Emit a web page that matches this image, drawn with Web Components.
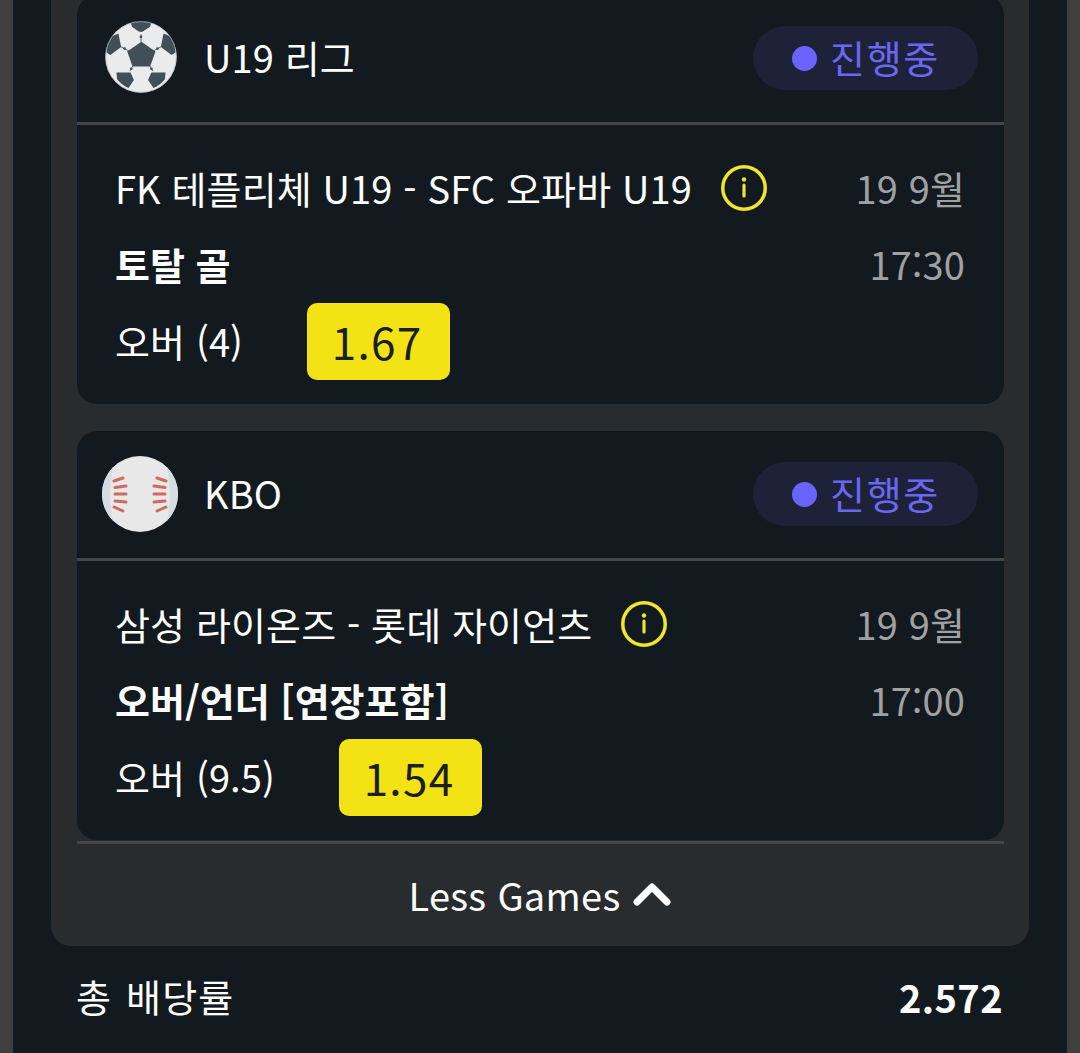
<!DOCTYPE html>
<html lang="ko">
<head>
<meta charset="utf-8">
<title>Bet slip</title>
<style>
  html, body { margin: 0; padding: 0; background: #131a1f; }
  body { height: 1053px; overflow: hidden; font-family: "Noto Sans CJK KR", "Noto Sans", sans-serif; color: #fff; }
</style>
</head>
<body>
<bet-slip total="2.572">
  <league-card league="U19 리그" ball="soccer" match="FK 테플리체 U19 - SFC 오파바 U19" market="토탈 골" pick="오버 (4)" odds="1.67" date="19 9월" time="17:30" class="first"></league-card>
  <league-card league="KBO" ball="baseball" match="삼성 라이온즈 - 롯데 자이언츠" market="오버/언더 [연장포함]" pick="오버 (9.5)" odds="1.54" date="19 9월" time="17:00"></league-card>
</bet-slip>

<script>
class BallIcon extends HTMLElement {
    connectedCallback() {
        this.attachShadow({ mode: 'open' });
        const soccer = `
            <svg viewBox="30 43 214 214" width="72" height="72">
                <circle cx="137" cy="150" r="106" fill="#e9ebec"/>
                <g stroke="#414f59" stroke-width="2.5" fill="none">
                    <path d="M137 82V105M78 120L101 132M196 120L173 132M113 176L104 192M163 176L172 192"/>
                </g>
                <g fill="#414f59">
                    <path d="M138 105L180 134L164 178L112 178L96 134Z"/>
                    <path d="M106 46Q137 38 168 46L164 60L140 76L130 74L110 60Z"/>
                    <path d="M70 80L78 120L46 144L34 136Q34 105 50 88Z"/>
                    <path d="M204 80L196 120L228 144L240 136Q240 105 224 88Z"/>
                    <path d="M64 196L106 196L116 218L100 242Q80 234 66 216Z"/>
                    <path d="M210 196L168 196L158 218L174 242Q194 234 208 216Z"/>
                    <circle cx="137" cy="90" r="4"/><circle cx="88" cy="125" r="4"/><circle cx="186" cy="125" r="4"/>
                    <circle cx="108" cy="185" r="4"/><circle cx="168" cy="185" r="4"/>
                </g>
                <circle cx="137" cy="150" r="105" fill="none" stroke="#aeb4b8" stroke-width="2"/>
            </svg>`;
        const baseball = `
            <svg viewBox="0 0 76 76" width="76" height="76">
                <circle cx="38" cy="38" r="38" fill="#e8e8e9"/>
                <path d="M11 11Q5 38 11 65Q0 53 0 38Q0 23 11 11Z" fill="#d3dde3"/>
                <path d="M65 11Q71 38 65 65Q76 53 76 38Q76 23 65 11Z" fill="#d3dde3"/>
                <g stroke="#cf6a5c" stroke-width="3" stroke-linecap="round" fill="none">
                    <path d="M12 25L21 22M13 31.500L24 30M13 38H24M13 45L24 46M12 51L21 55"/>
                    <path d="M64 25L55 22M63 31.500L52 30M63 38H52M63 45L52 46M64 51L55 55"/>
                </g>
            </svg>`;
        this.shadowRoot.innerHTML = `
            <style>
                :host { display: flex; width: 76px; height: 76px; align-items: center; justify-content: center; flex: none; }
                svg { display: block; }
            </style>
            ${this.getAttribute('kind') === 'baseball' ? baseball : soccer}`;
    }
}

class StatusPill extends HTMLElement {
    connectedCallback() {
        this.attachShadow({ mode: 'open' });
        this.shadowRoot.innerHTML = `
            <style>
                :host {
                    display: flex;
                    align-items: center;
                    gap: 13px;
                    width: 225px;
                    height: 64px;
                    box-sizing: border-box;
                    padding-left: 39px;
                    border-radius: 32px;
                    background: #1d2238;
                    color: #6a67f5;
                    font-size: 38px;
                    letter-spacing: 1.700px;
                }
                .dot { width: 25px; height: 25px; border-radius: 50%; background: #6a63ff; }
                .label { padding-bottom: 3px; }
            </style>
            <span class="dot"></span><span class="label"><slot></slot></span>`;
    }
}

class InfoIcon extends HTMLElement {
    connectedCallback() {
        this.attachShadow({ mode: 'open' });
        this.shadowRoot.innerHTML = `
            <style>
                :host { display: block; width: 46px; height: 46px; flex: none; }
                svg { display: block; }
            </style>
            <svg viewBox="0 0 46 46" width="46" height="46">
                <circle cx="23" cy="23" r="21.250" fill="none" stroke="#f0e42e" stroke-width="3.500"/>
                <circle cx="23" cy="14.500" r="2.200" fill="#f0e42e"/>
                <path d="M23 20V31" stroke="#f0e42e" stroke-width="3.200" stroke-linecap="round"/>
            </svg>`;
    }
}

class OddsButton extends HTMLElement {
    connectedCallback() {
        this.attachShadow({ mode: 'open' });
        this.shadowRoot.innerHTML = `
            <style>
                :host {
                    display: flex;
                    align-items: center;
                    justify-content: center;
                    box-sizing: border-box;
                    width: 143px;
                    height: 77px;
                    padding: 0 3px 2px 0;
                    border-radius: 10px;
                    background: #f3e314;
                    color: #1b1f22;
                    font-size: 44px;
                    letter-spacing: 1.300px;
                }
            </style>
            <slot></slot>`;
    }
}

class LeagueCard extends HTMLElement {
    connectedCallback() {
        this.attachShadow({ mode: 'open' });
        const attr = name => this.getAttribute(name);
        const isBaseball = attr('ball') === 'baseball';
        this.shadowRoot.innerHTML = `
            <style>
                :host {
                    display: block;
                    background: #131a1f;
                    border-radius: 20px;
                    font-size: 38px;
                    letter-spacing: 0.120px;
                }
                .head {
                    display: flex;
                    align-items: center;
                    height: 130px;
                    padding: 0 26px 1px ${isBaseball ? 25 : 26}px;
                    border-bottom: 3px solid #434548;
                    box-sizing: border-box;
                }
                .league { margin-left: ${isBaseball ? 26 : 25}px; padding-bottom: 3px; flex: 1; }
                ball-icon { margin-top: ${isBaseball ? 0 : -2}px; }
                .body { padding: 26px 39px 24px 38px; }
                .row { display: flex; align-items: center; justify-content: space-between; box-sizing: border-box; }
                .r1 { height: 77px; padding-bottom: 4px; }
                .r2 { height: 75px; padding-bottom: 4px; }
                .r3 { height: 77px; justify-content: flex-start; }
                .match { display: flex; align-items: center; gap: 29px; }
                .market { font-weight: 700; letter-spacing: 0; }
                .when { color: #9fa1a3; }
                .pick { margin-right: 64px; padding-bottom: 2px; }
            </style>
            <div class="head">
                <ball-icon kind="${attr('ball')}"></ball-icon>
                <span class="league">${attr('league')}</span>
                <status-pill>진행중</status-pill>
            </div>
            <div class="body">
                <div class="row r1">
                    <div class="match"><span>${attr('match')}</span><info-icon></info-icon></div>
                    <span class="when">${attr('date')}</span>
                </div>
                <div class="row r2">
                    <span class="market">${attr('market')}</span>
                    <span class="when">${attr('time')}</span>
                </div>
                <div class="row r3">
                    <span class="pick">${attr('pick')}</span>
                    <odds-button>${attr('odds')}</odds-button>
                </div>
            </div>`;
    }
}

class BetSlip extends HTMLElement {
    connectedCallback() {
        this.attachShadow({ mode: 'open' });
        this.shadowRoot.innerHTML = `
            <style>
                :host {
                    display: block;
                    height: 1053px;
                    box-sizing: border-box;
                    padding: 0 13px;
                    background: #3f3f3f;
                }
                .page { height: 100%; background: #131a1f; padding: 0 38px; overflow: hidden; }
                .panel {
                    margin-top: -30px;
                    padding: 25px 25px 0 26px;
                    height: 976px;
                    box-sizing: border-box;
                    background: #282c2f;
                    border-radius: 0 0 20px 20px;
                }
                ::slotted(league-card) { margin-bottom: 27px; }
                ::slotted(league-card:last-child) { margin-bottom: 0; }
                .less {
                    display: flex;
                    align-items: center;
                    justify-content: center;
                    gap: 12px;
                    box-sizing: border-box;
                    height: 105px;
                    margin-top: 1px;
                    padding: 0 2px 1px 0;
                    border-top: 3px solid #434548;
                    font-size: 38px;
                    letter-spacing: 0.300px;
                }
                .less svg { margin-top: -2px; }
                .total {
                    display: flex;
                    align-items: center;
                    justify-content: space-between;
                    height: 102px;
                    padding: 0 26px 0 25px;
                    font-size: 38px;
                }
                .total span { word-spacing: 2px; letter-spacing: 1.200px; padding-bottom: 4px; }
                .total b { font-size: 38px; font-weight: 700; letter-spacing: 0.400px; padding-bottom: 2px; }
            </style>
            <div class="page">
                <div class="panel">
                    <slot></slot>
                    <div class="less">
                        <span>Less Games</span>
                        <svg width="38" height="24" viewBox="0 0 38 24"><path d="M4 20L19 5L34 20" fill="none" stroke="#fff" stroke-width="7" stroke-linecap="round" stroke-linejoin="round"/></svg>
                    </div>
                </div>
                <div class="total"><span>총 배당률</span><b>${this.getAttribute('total')}</b></div>
            </div>`;
    }
}

customElements.define('ball-icon', BallIcon);
customElements.define('status-pill', StatusPill);
customElements.define('info-icon', InfoIcon);
customElements.define('odds-button', OddsButton);
customElements.define('league-card', LeagueCard);
customElements.define('bet-slip', BetSlip);
</script>
</body>
</html>
